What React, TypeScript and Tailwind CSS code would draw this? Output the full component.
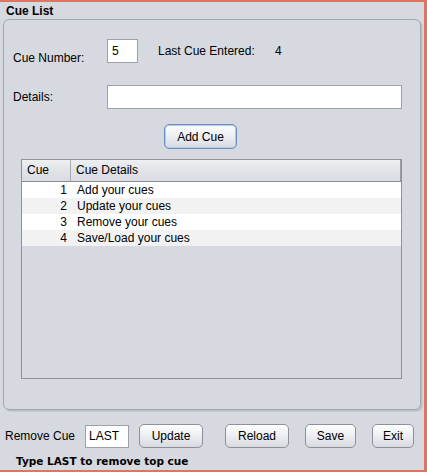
import React from 'react';

const cues = [
  { id: 1, text: 'Add your cues' },
  { id: 2, text: 'Update your cues' },
  { id: 3, text: 'Remove your cues' },
  { id: 4, text: 'Save/Load your cues' },
];

function NimbusButton({ label, width, focused }: { label: string; width: string; focused?: boolean }) {
  return (
    <button
      type="button"
      className={
        'flex items-center justify-center rounded-[5px] bg-gradient-to-b from-[#fdfdfe] via-[#eceef1] to-[#d7dae0] text-[12px] leading-[14px] text-black ' +
        width +
        (focused
          ? ' border border-[#6c8fc2] shadow-[inset_0_0_0_1px_#b5c8e4]'
          : ' border border-[#8d9096] shadow-[inset_0_1px_0_#ffffff]')
      }
    >
      {label}
    </button>
  );
}

export default function App() {
  return (
    <div className="flex h-[472px] w-[427px] flex-col border-t-2 border-r-[3px] border-b-2 border-[#dd765e] bg-[#d6d9df] font-['Liberation_Sans',Arial,sans-serif] text-[12px] text-black">
      {/* Title */}
      <div className="h-[17px] pl-[6px] pt-[1px] text-[12px] font-bold leading-[16px]">Cue List</div>

      {/* Titled panel */}
      <div className="ml-[3px] flex h-[391px] w-[418px] flex-col rounded-[6px] border border-[#a3a7ae] shadow-[1px_1px_0_#b9bcc2,2px_2px_0_#c8cbd1]">
        {/* Cue number row */}
        <div className="mt-[19px] flex h-[24px] items-start pl-[9px]">
          <span className="mt-[12px] w-[94px] leading-[14px]">Cue Number:</span>
          <input
            readOnly
            value="5"
            className="h-[24px] w-[31px] border border-[#9ea2a8] bg-white px-[4px] text-[12px] leading-[14px] text-black outline-none"
          />
          <span className="ml-[20px] mt-[5px] w-[117px] leading-[14px]">Last Cue Entered:</span>
          <span className="mt-[5px] leading-[14px]">4</span>
        </div>

        {/* Details row */}
        <div className="mt-[22px] flex h-[24px] items-center pl-[9px]">
          <span className="w-[94px] leading-[14px]">Details:</span>
          <input
            readOnly
            value=""
            className="h-[24px] w-[295px] border border-[#9ea2a8] bg-white px-[4px] text-[12px] leading-[14px] outline-none"
          />
        </div>

        {/* Add button */}
        <div className="mt-[15px] flex pl-[160px]">
          <NimbusButton label="Add Cue" width="h-[25px] w-[73px]" focused />
        </div>

        {/* Table */}
        <div className="ml-[17px] mt-[10px] flex h-[220px] w-[381px] flex-col border border-[#8e9195]">
          <div className="flex h-[22px] border-b border-[#8a8d92] bg-gradient-to-b from-[#eef0f2] via-[#e0e3e7] to-[#d9dce1] leading-[21px]">
            <div className="w-[49px] border-r border-[#a9acb2] pl-[5px]">Cue</div>
            <div className="flex-1 border-r border-[#9a9da3] pl-[5px]">Cue Details</div>
          </div>
          {cues.map((c, i) => (
            <div key={c.id} className={'flex h-[16px] leading-[16px] ' + (i % 2 === 0 ? 'bg-white' : 'bg-[#f2f2f2]')}>
              <div className="w-[49px] pr-[4px] text-right">{c.id}</div>
              <div className="flex-1 pl-[6px]">{c.text}</div>
            </div>
          ))}
        </div>
      </div>

      {/* Bottom controls */}
      <div className="mt-[14px] flex h-[24px] items-center pl-[5px]">
        <span className="w-[80px] leading-[14px]">Remove Cue</span>
        <input
          readOnly
          value="LAST"
          className="h-[23px] w-[44px] border border-[#9ea2a8] bg-white px-[3px] text-[12px] leading-[14px] outline-none"
        />
        <div className="ml-[10px]">
          <NimbusButton label="Update" width="h-[24px] w-[64px]" />
        </div>
        <div className="ml-[22px]">
          <NimbusButton label="Reload" width="h-[24px] w-[64px]" />
        </div>
        <div className="ml-[16px]">
          <NimbusButton label="Save" width="h-[24px] w-[51px]" />
        </div>
        <div className="ml-[16px]">
          <NimbusButton label="Exit" width="h-[24px] w-[42px]" />
        </div>
      </div>

      <div className="pl-[16px] pt-[7px] font-['DejaVu_Sans',sans-serif] text-[10.5px] font-bold leading-[13px]">
        Type LAST to remove top cue
      </div>
    </div>
  );
}
